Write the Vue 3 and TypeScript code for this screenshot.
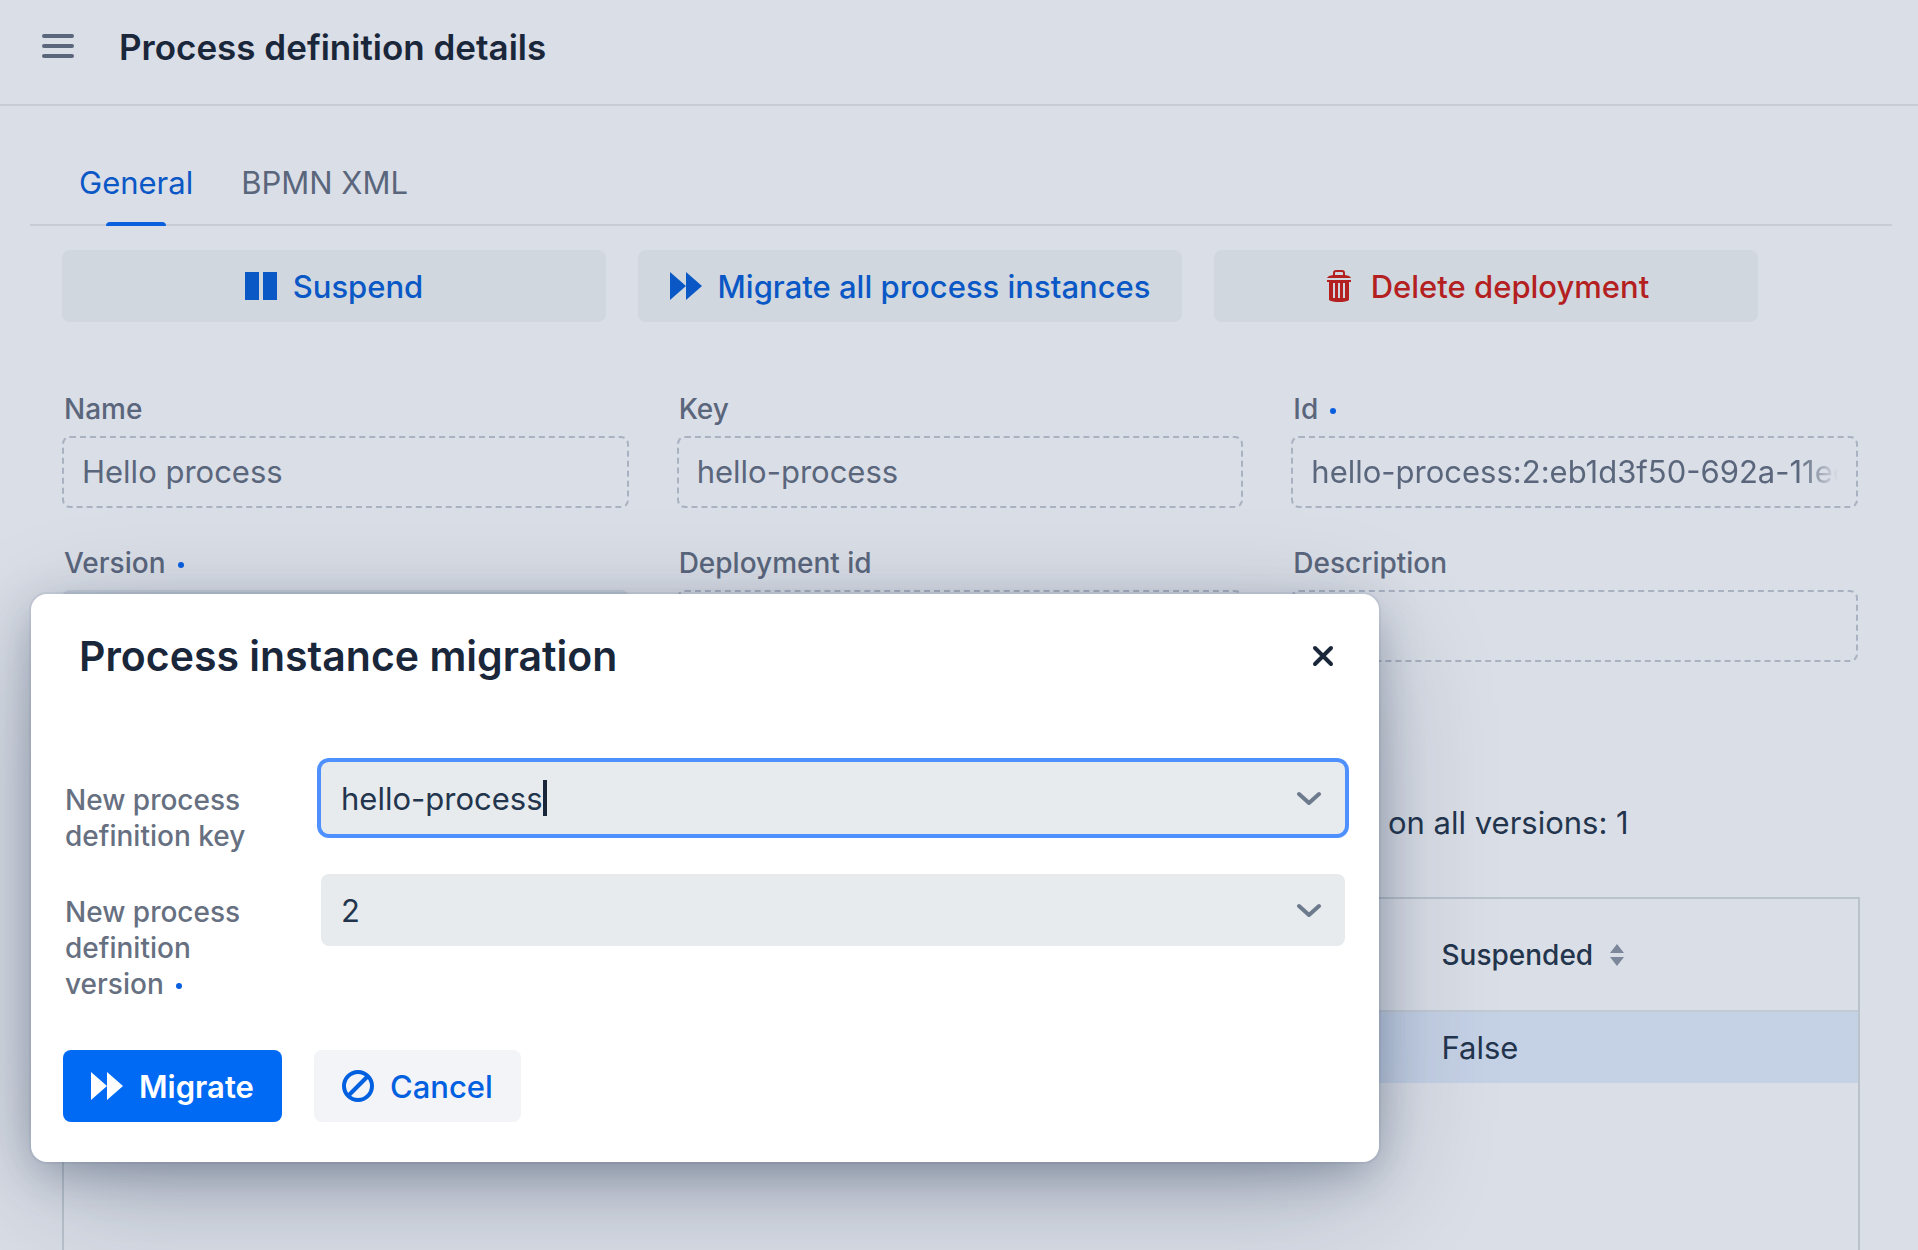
<script setup lang="ts">
import { ref } from 'vue'

interface Field {
  id: string
  label: string
  value: string
  required?: boolean
  filled?: boolean
  fade?: boolean
}

const fields: Field[] = [
  { id: 'name', label: 'Name', value: 'Hello process' },
  { id: 'key', label: 'Key', value: 'hello-process' },
  { id: 'def-id', label: 'Id', value: 'hello-process:2:eb1d3f50-692a-11ee', required: true, fade: true },
  { id: 'version', label: 'Version', value: '', required: true, filled: true },
  { id: 'deployment', label: 'Deployment id', value: '' },
  { id: 'description', label: 'Description', value: '' },
]

const newKey = ref('hello-process')
const newVersion = ref('2')
</script>

<template>
  <div class="page">
    <header class="topbar">
      <button class="menu" type="button" aria-label="Toggle menu"><i /><i /><i /></button>
      <h1>Process definition details</h1>
    </header>

    <main>
      <nav class="tabs">
        <a class="tab active" href="#general">General</a>
        <a class="tab" href="#bpmn">BPMN XML</a>
      </nav>

      <div class="content">
        <div class="actions">
          <button type="button" class="btn">
            <svg width="32" height="32" viewBox="0 0 32 32" fill="currentColor"><path d="M0 2h14v28H0zM18 2h14v28H18z" /></svg>
            <span>Suspend</span>
          </button>
          <button type="button" class="btn">
            <svg width="32" height="32" viewBox="0 0 16 16" fill="currentColor"><path d="M0 1l8 7-8 7zM8 1l8 7-8 7z" /></svg>
            <span>Migrate all process instances</span>
          </button>
          <button type="button" class="btn danger">
            <svg width="32" height="32" viewBox="0 0 32 32" fill="currentColor" fill-rule="evenodd">
              <path d="M10 5V3a3 3 0 0 1 3-3h6a3 3 0 0 1 3 3v2q5 .5 6 3H4q1-2.500 6-3zM12 5h8V3a1 1 0 0 0-1-1h-6a1 1 0 0 0-1 1z" />
              <path d="M4 10h24v2h-2v18q-3 2-10 2t-10-2V12H4zM10 13v15h2V13zM15 13v15h2V13zM20 13v15h2V13z" />
            </svg>
            <span>Delete deployment</span>
          </button>
        </div>

        <div class="fields">
          <div v-for="f in fields" :key="f.id" class="field">
            <label :for="f.id">{{ f.label }}<b v-if="f.required" class="dot" /></label>
            <div class="box" :class="{ filled: f.filled }">
              <input :id="f.id" :class="{ fade: f.fade }" type="text" readonly :value="f.value" />
            </div>
          </div>
        </div>

        <p class="summary">on all versions: 1</p>

        <div class="grid">
          <table>
            <thead>
              <tr>
                <th class="wide" />
                <th>
                  <span class="sorter">Suspended
                    <svg width="16" height="22" viewBox="0 0 16 22" fill="currentColor"><path d="M8 0l7 9H1zM1 13h14l-7 9z" /></svg>
                  </span>
                </th>
              </tr>
            </thead>
            <tbody>
              <tr><td /><td>False</td></tr>
            </tbody>
          </table>
        </div>
      </div>
    </main>

    <section class="dialog" role="dialog" aria-labelledby="dialog-title">
      <div class="dialog-head">
        <h2 id="dialog-title">Process instance migration</h2>
        <button type="button" class="close" aria-label="Close">
          <svg width="24" height="24" viewBox="0 0 24 24" fill="none" stroke="currentColor" stroke-width="4" stroke-linecap="round"><path d="M4 4l16 16M20 4L4 20" /></svg>
        </button>
      </div>
      <form class="form" @submit.prevent>
        <label for="new-key">New process definition key</label>
        <div class="combo focused">
          <span class="value"><input id="new-key" v-model="newKey" type="text" role="combobox" /><i class="caret" /></span>
          <svg width="24" height="16" viewBox="0 0 24 16" fill="none" stroke="currentColor" stroke-width="4" stroke-linecap="round" stroke-linejoin="round"><path d="M2 4l10 9 10-9" /></svg>
        </div>
        <label for="new-version">New process definition version<b class="dot" /></label>
        <div class="combo">
          <select id="new-version" v-model="newVersion">
            <option>1</option>
            <option>2</option>
          </select>
          <svg width="24" height="16" viewBox="0 0 24 16" fill="none" stroke="currentColor" stroke-width="4" stroke-linecap="round" stroke-linejoin="round"><path d="M2 4l10 9 10-9" /></svg>
        </div>
        <div class="buttons">
          <button type="submit" class="btn primary">
            <svg width="32" height="32" viewBox="0 0 16 16" fill="currentColor"><path d="M0 1l8 7-8 7zM8 1l8 7-8 7z" /></svg>
            <span>Migrate</span>
          </button>
          <button type="button" class="btn light">
            <svg width="32" height="32" viewBox="0 0 16 16" fill="none" stroke="currentColor" stroke-width="2"><circle cx="8" cy="8" r="7" /><path d="M3 13L13 3" /></svg>
            <span>Cancel</span>
          </button>
        </div>
      </form>
    </section>
  </div>
</template>

<style>
body {
  background: #dadee6;
}
</style>

<style scoped>
.page {
  position: relative;
  height: 100vh;
  overflow: hidden;
  display: flex;
  flex-direction: column;
  background: #dadee6;
  color: #23354d;
  font-family: Inter, "Liberation Sans", sans-serif;
  font-size: 31px;
  line-height: 40px;
}
.page * {
  box-sizing: border-box;
}
h1, h2, p {
  margin: 0;
}
button, input, select {
  font: inherit;
  color: inherit;
  border: 0;
  padding: 0;
  background: none;
}
.topbar {
  display: flex;
  align-items: center;
  gap: 45px;
  height: 106px;
  padding: 0 42px 12px;
  border-bottom: 2px solid #c8ccd7;
  flex: none;
}
.menu {
  display: flex;
  flex-direction: column;
  gap: 6px;
  width: 32px;
}
.menu i {
  height: 4px;
  border-radius: 2px;
  background: #5a667c;
}
h1 {
  padding-top: 2px;
  font-size: 35px;
  font-weight: 600;
  color: #1a273b;
}
main {
  flex: 1;
  display: flex;
  flex-direction: column;
  padding: 34px 26px 0 30px;
}
.tabs {
  display: flex;
  height: 86px;
  padding-left: 25px;
  border-bottom: 2px solid #c8ccd7;
}
.tab {
  position: relative;
  padding: 23px 24px 0;
  color: #5a667c;
  text-decoration: none;
}
.tab.active {
  color: #0a57c6;
}
.tab.active::after {
  content: "";
  position: absolute;
  left: 50%;
  bottom: -2px;
  width: 60px;
  margin-left: -30px;
  height: 4px;
  border-radius: 4px 4px 0 0;
  background: #0a5fdf;
}
.content {
  flex: 1;
  display: flex;
  flex-direction: column;
  padding: 24px 32px 0;
}
.actions {
  display: flex;
  gap: 32px;
  padding-right: 102px;
}
.btn {
  display: flex;
  align-items: center;
  justify-content: center;
  gap: 16px;
  height: 72px;
  border-radius: 8px;
  white-space: nowrap;
  color: #0a57c6;
  background: #d0d7df;
  font-weight: 500;
}
.btn span {
  padding-top: 2px;
}
.actions .btn {
  flex: 1 1 0;
}
.btn.danger {
  color: #b41f1f;
}
.fields {
  display: grid;
  grid-template-columns: repeat(3, 1fr);
  column-gap: 48px;
  row-gap: 34px;
  padding: 66px 2px 0 0;
}
.field {
  display: flex;
  flex-direction: column;
}
label {
  font-size: 28px;
  line-height: 36px;
  font-weight: 450;
  color: #5a667c;
}
.field label {
  padding: 3px 0 0 2px;
  height: 48px;
}
.dot {
  display: inline-block;
  width: 6px;
  height: 6px;
  margin-left: 12px;
  border-radius: 50%;
  background: #0a5fdf;
  vertical-align: 5px;
}
.box {
  display: flex;
  height: 72px;
  padding: 0 18px;
  border: 2px dashed #a9b2c1;
  border-radius: 8px;
  color: #5a667c;
}
.box input {
  flex: 1;
  min-width: 0;
  outline: none;
}
.box.filled {
  border: 0;
  background: #c6ced8;
}
.fade {
  -webkit-mask-image: linear-gradient(to left, transparent, #000 40px);
  mask-image: linear-gradient(to left, transparent, #000 40px);
}
.summary {
  padding: 141px 0 0 1326px;
  white-space: nowrap;
}
.grid {
  flex: 1;
  margin-top: 54px;
  border: 2px solid #bac2cc;
  border-bottom: 0;
}
table {
  width: 100%;
  border-collapse: collapse;
  table-layout: fixed;
}
th, td {
  padding: 0 32px;
  text-align: left;
}
th {
  height: 112px;
  font-size: 28px;
  font-weight: 500;
  border-bottom: 2px solid #c2cad4;
}
.wide {
  width: 75%;
}
td {
  height: 72px;
  background: #c5d1e5;
}
.sorter {
  display: flex;
  align-items: center;
  gap: 16px;
}
.sorter svg {
  color: #7c879b;
}
.dialog {
  position: absolute;
  left: 31px;
  top: 594px;
  width: 1348px;
  padding: 32px;
  border-radius: 16px;
  background: #fff;
  box-shadow: 0 0 0 2px rgba(26, 57, 96, 0.06), 0 12px 48px -6px rgba(24, 45, 75, 0.36), 0 36px 120px -16px rgba(24, 45, 75, 0.32);
}
.dialog-head {
  display: flex;
  align-items: center;
  justify-content: space-between;
  padding: 0 12px 8px 16px;
  height: 68px;
}
h2 {
  font-size: 41px;
  line-height: 48px;
  font-weight: 600;
  color: #1a273b;
}
.close {
  display: flex;
  color: #1a273b;
}
.form {
  display: grid;
  grid-template-columns: 225px 1fr;
  column-gap: 33px;
  padding: 68px 2px 8px 0;
}
.form label {
  padding: 20px 20px 0 2px;
  min-height: 112px;
  color: #667081;
}
.combo {
  display: flex;
  align-items: center;
  justify-content: space-between;
  height: 72px;
  padding: 0 24px 0 20px;
  border-radius: 8px;
  background: #e7ebee;
  color: #23354d;
}
.combo.focused {
  box-shadow: 0 0 0 4px #4f90ff;
}
.combo svg {
  color: #6d7a8d;
}
.combo input {
  field-sizing: content;
  outline: none;
}
.combo input, .combo select {
  padding-top: 2px;
}
.combo select {
  flex: 1;
  appearance: none;
  outline: none;
}
.value {
  display: flex;
  align-items: center;
}
.caret {
  width: 4px;
  height: 36px;
  background: #1a273b;
}
.buttons {
  grid-column: 1 / -1;
  display: flex;
  gap: 32px;
  padding-top: 48px;
}
.buttons .btn {
  padding: 0 28px;
}
.btn.primary {
  background: #006af5;
  color: #fff;
  font-weight: 600;
}
.btn.light {
  background: #f3f4f7;
  color: #0060df;
}
</style>
